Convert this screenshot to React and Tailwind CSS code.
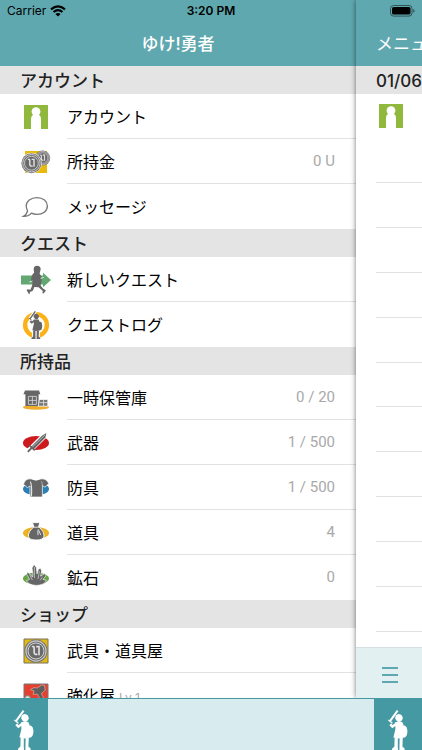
const GRAY = "#666666";

/* ---------- icons ---------- */

function Svg({ children }) {
  return (
    <svg viewBox="0 0 32 32" className="w-8 h-8 shrink-0" aria-hidden="true">
      {children}
    </svg>
  );
}

// little hero with sword and shield, 20 x 40
function Hero({ fill }) {
  return (
    <g fill={fill}>
      <path d="M9.6 0.6L2.2 10.8" stroke={fill} strokeWidth="2" />
      <path d="M0.4 10L4.4 13.2" stroke={fill} strokeWidth="1.4" />
      <path d="M2.2 14.4L4.4 16.6L8 14" fill="none" stroke={fill} strokeWidth="2.4" />
      <path d="M7.2 8.6Q7 4.4 10.8 4Q14.6 4.4 14.8 8.6L14.2 9.8Q13.4 12 11 12Q8.8 12 8 9.8z" />
      <path d="M7.2 12H14.2L15.6 15L16.4 27.6Q11 29.2 5.4 27.6L7.4 19z" />
      <ellipse cx="16.2" cy="21.4" rx="3.2" ry="6" />
      <path d="M6.6 28H9.8L9.8 36.6L10 40H4L4.2 38.4L6.4 36.6z" />
      <path d="M11.6 28H14.8L14.4 36.6L16.6 38.4V40H11.4z" />
    </g>
  );
}

function AccountIcon() {
  return (
    <Svg>
      <path d="M4 4h24v24h-24z" fill="#8fb83c" />
      <circle cx="16" cy="10.6" r="4.4" fill="#fff" />
      <path d="M11 28V18Q11 13.6 16 13.6Q21 13.6 21 18V28z" fill="#fff" />
    </Svg>
  );
}

function Coin({ cx, cy, r }) {
  return (
    <g transform={`translate(${cx} ${cy}) scale(${r / 10})`}>
      <circle r="10" fill="#707070" />
      <circle r="8.7" fill="none" stroke="#c9c9c9" strokeWidth="1" />
      <circle r="6.9" fill="#6a6a6a" stroke="#dadada" strokeWidth="0.8" />
      <path
        d="M-3.4 -3.6Q-1.8 -4.4 -1.6 -3V1.4Q-1.4 3.4 1.2 2.8M0.2 -3.8H2.6V3.6"
        fill="none"
        stroke="#e2e2e2"
        strokeWidth="1.4"
      />
    </g>
  );
}

function MoneyIcon() {
  return (
    <Svg>
      <path d="M5 5h22v22h-22z" fill="#e9b90c" />
      <Coin cx={22.6} cy={12} r={7.6} />
      <circle cx="11.4" cy="17.2" r="10.5" fill="#fff" />
      <Coin cx={11.4} cy={17.2} r={10} />
    </Svg>
  );
}

function MessageIcon() {
  return (
    <Svg>
      <path
        d="M17 6.6C23.2 6.6 27.4 10.4 27.4 15C27.4 19.8 23.2 23.4 17 23.4C14.8 23.4 13 23 11.4 22.2C9.4 24.6 6.6 25.6 3.4 25.4C5.6 24.2 7 22.4 7.6 20C6.8 18.4 6.2 16.8 6.2 15C6.2 10.4 10.8 6.6 17 6.6z"
        fill="#fff"
        stroke="#777"
        strokeWidth="1.3"
      />
    </Svg>
  );
}

function NewQuestIcon() {
  return (
    <Svg>
      <path d="M1 11.4H23V8.8L31 16L23 23.2V20.4H1z" fill="#63a873" />
      <path
        d="M14.6 2.6Q17 0.8 19.6 2.4Q21.4 4 20.4 6.6L19.6 9.6Q22 12 21.6 16L20.6 21.4L23 24.6L26 26.4L23.6 29.6L22.4 29L22.8 27L18.6 23.2L14.4 23L12.8 26.8L9.6 28.2L10.2 29.4L8.8 30L6.6 26L7.6 25.2L10.4 25.8L12 22L12.6 18L10.8 17.6L11.6 12.4Q12.6 9.6 14.2 8.8Q13 4.4 14.6 2.6z"
        fill={GRAY}
      />
      <path d="M9.4 18l3-1M20.6 14.4l3.2-1" stroke="#dfeee2" strokeWidth="1" />
    </Svg>
  );
}

function QuestLogIcon() {
  return (
    <Svg>
      <circle cx="16" cy="16" r="10.9" fill="none" stroke="#fbb117" strokeWidth="4.4" />
      <g transform="translate(8.6 2) scale(0.7)">
        <path d="M9.6 0.6L2.2 10.8" stroke="#fff" strokeWidth="5" />
        <path d="M5 28V41H16V28z" fill="#fff" />
        <Hero fill={GRAY} />
      </g>
    </Svg>
  );
}

function StorageIcon() {
  return (
    <Svg>
      <ellipse cx="16" cy="25.2" rx="13" ry="2.5" fill="#f0ad2b" />
      <path d="M5 8.6H19L20.4 12.2H18.6V24H5.4V12.2H3.4z" fill={GRAY} />
      <path d="M8.4 14.4h8v8h-8zM12.4 14v8.6M8.4 18.4h8" fill="none" stroke="#cfcfcf" strokeWidth="0.9" />
      <path d="M19.4 17.4h8.4v6.8h-9.6z" fill="#777" stroke="#fff" strokeWidth="0.8" />
      <path d="M23.6 17.4v6.6M19.4 20.6h8.6" stroke="#e6e6e6" strokeWidth="0.8" />
    </Svg>
  );
}

function WeaponIcon() {
  return (
    <Svg>
      <ellipse cx="16" cy="16" rx="13" ry="7" fill="#cc1a1f" />
      <path d="M8.4 24.6L26.6 6.6" stroke="#fff" strokeWidth="5.6" />
      <path d="M10.4 20.4L22 8.8L26.4 6L25.4 10.4L13.6 22.4z" fill={GRAY} />
      <path d="M11.4 21L25 8" stroke="#c4c4c4" strokeWidth="0.8" />
      <path d="M9.4 18.4L14.8 23.4M7.8 24.8L11.6 21" stroke={GRAY} strokeWidth="1.8" />
    </Svg>
  );
}

function ArmorIcon() {
  return (
    <Svg>
      <ellipse cx="16" cy="17" rx="13" ry="6.2" fill="#2c7fb4" />
      <path
        d="M11.6 7Q16 9.4 20.4 7Q26.4 6 28.8 11.6L25 15.2L22.4 13.6V25H10V14L7.4 15.6L3.4 12.2Q5.6 6 11.6 7z"
        fill={GRAY}
        stroke="#fff"
        strokeWidth="0.7"
      />
      <path d="M10.4 9.6Q12.2 14 11.4 24.4" fill="none" stroke="#e8e8e8" strokeWidth="1.1" />
      <path d="M21.4 9.4Q22.4 11 22.4 14" fill="none" stroke="#c4c4c4" strokeWidth="0.8" />
    </Svg>
  );
}

function ToolIcon() {
  return (
    <Svg>
      <ellipse cx="16" cy="16" rx="13" ry="6" fill="#ebb223" />
      <path
        d="M12.4 5.6H19.8L18.6 9.8Q24.6 14.6 24 19.4Q23.2 23 16.2 23Q9 23 8.4 19.4Q8 14.6 14 9.8z"
        fill={GRAY}
        stroke="#fff"
        strokeWidth="0.9"
      />
      <path d="M13.4 10.2H19.2M18.2 12.4L20.8 18M17.8 13.4L18 18.2" fill="none" stroke="#eee" strokeWidth="0.9" />
    </Svg>
  );
}

function OreIcon() {
  return (
    <Svg>
      <ellipse cx="16" cy="16.4" rx="13" ry="6" fill="#64a744" />
      <path
        d="M13 12L12 6L14 2.6L16.4 5.6L17 12L18.4 7.2L20.6 6.2L21.6 9L20.6 14.2L24.8 11.6L26 13.8L23 17.4L26.6 18.4Q24.4 23.2 16 23.4Q8 22.8 6.4 18.6L9.6 17.4L6.8 12.6L7.4 10L10.4 12.2L12.4 15z"
        fill={GRAY}
        stroke="#fff"
        strokeWidth="0.6"
      />
      <path d="M14.4 5V16M19.4 9L18 17M9.4 12.4L12.4 18M22.6 14.8L20 18.4" stroke="#d8d8d8" strokeWidth="0.7" />
    </Svg>
  );
}

function ShopIcon() {
  return (
    <Svg>
      <path d="M4 4h24v24h-24z" fill="#e3b915" stroke="#77735f" strokeWidth="1" />
      <Coin cx={16} cy={16} r={11.6} />
    </Svg>
  );
}

function ForgeIcon() {
  return (
    <Svg>
      <path d="M4 4h24v24h-24z" fill="#e5402f" stroke="#777" strokeWidth="1" />
      <path d="M10.4 9.6L14 7.6L17.4 8L21.6 5L24.6 5.6L25.2 10.4L21.4 13.4L24.4 20L21.4 21.6L17.4 14L13 14.4L14.2 11z" fill="#5e5e5e" stroke="#f7b5ab" strokeWidth="0.6" />
      <circle cx="7.6" cy="18.6" r="3" fill="#ddd" stroke="#777" />
      <path d="M10 20.4h8v3h-8z" fill="#ddd" />
    </Svg>
  );
}

function WifiIcon() {
  return (
    <svg viewBox="0 0 16 12" className="w-4 h-3" aria-hidden="true">
      <path d="M1 4.4Q8 -1.8 15 4.4" fill="none" stroke="#000" strokeWidth="2.1" />
      <path d="M3.5 7.1Q8 3.1 12.5 7.1" fill="none" stroke="#000" strokeWidth="2" />
      <path d="M8 11.6L5.4 9Q8 6.9 10.6 9z" />
    </svg>
  );
}

function BatteryIcon() {
  return (
    <svg viewBox="0 0 25 12" className="w-[25px] h-3" aria-hidden="true">
      <rect x="0.5" y="0.5" width="21.5" height="10.6" rx="3" fill="none" stroke="#2f5457" />
      <rect x="2" y="2" width="18.5" height="7.6" rx="1.6" />
      <path d="M23.2 4V7.8Q24.6 7 24.6 5.9Q24.6 4.8 23.2 4z" fill="#2f5457" />
    </svg>
  );
}

/* ---------- data ---------- */

const sections = [
  {
    title: "アカウント",
    items: [
      { label: "アカウント", icon: AccountIcon },
      { label: "所持金", icon: MoneyIcon, value: "0 U" },
      { label: "メッセージ", icon: MessageIcon },
    ],
  },
  {
    title: "クエスト",
    items: [
      { label: "新しいクエスト", icon: NewQuestIcon },
      { label: "クエストログ", icon: QuestLogIcon },
    ],
  },
  {
    title: "所持品",
    items: [
      { label: "一時保管庫", icon: StorageIcon, value: "0 / 20" },
      { label: "武器", icon: WeaponIcon, value: "1 / 500" },
      { label: "防具", icon: ArmorIcon, value: "1 / 500" },
      { label: "道具", icon: ToolIcon, value: "4" },
      { label: "鉱石", icon: OreIcon, value: "0" },
    ],
  },
  {
    title: "ショップ",
    items: [
      { label: "武具・道具屋", icon: ShopIcon },
      { label: "強化屋", icon: ForgeIcon, note: "Lv 1" },
    ],
  },
];

/* ---------- parts ---------- */

function StatusBar() {
  return (
    <div className="absolute inset-x-0 top-0 z-20 h-[22px] grid grid-cols-3 items-center px-[7px] text-[12px] text-black">
      <div className="flex items-center gap-1">
        <span>Carrier</span>
        <WifiIcon />
      </div>
      <span className="text-center font-semibold">3:20 PM</span>
      <div className="flex justify-end">
        <BatteryIcon />
      </div>
    </div>
  );
}

function SectionTitle({ children }) {
  return (
    <h2 className="h-7 shrink-0 flex items-center pt-[3px] pl-5 bg-[#e4e4e4] text-[17px] font-medium text-[#222]">
      {children}
    </h2>
  );
}

function MenuRow({ item, last }) {
  const Icon = item.icon;
  return (
    <li>
      <button type="button" className="w-full h-[45px] flex items-center gap-[15px] pl-5 text-left">
        <Icon />
        <span
          className={
            "flex-1 h-full flex items-center justify-between pt-px pr-[21px] border-b " +
            (last ? "border-transparent" : "border-[#e2e2e2]")
          }
        >
          <span className="text-[16px] text-black">
            {item.label}
            {item.note && <span className="ml-1 text-[12px] text-[#aaa]">{item.note}</span>}
          </span>
          {item.value && <span className="font-['Roboto',sans-serif] text-[15px] text-[#a9a9a9]">{item.value}</span>}
        </span>
      </button>
    </li>
  );
}

function HeroButton() {
  return (
    <button type="button" aria-label="勇者" className="w-12 bg-[#4499a3] flex justify-center items-end">
      <svg viewBox="0 0 20 40" className="w-5 h-10" aria-hidden="true">
        <Hero fill="#fff" />
      </svg>
    </button>
  );
}

function App() {
  return (
    <div
      className="relative h-screen flex flex-col overflow-hidden bg-white font-['Inter','Noto_Sans_CJK_JP',sans-serif]"
    >
      <StatusBar />

      <div className="flex-1 min-h-0 flex">
        {/* side menu */}
        <nav className="flex-1 min-w-0 overflow-hidden">
          <header className="h-[66px] pt-6 bg-[#5fa8af] flex items-center justify-center">
            <h1 className="text-[17px] font-medium text-white">ゆけ!勇者</h1>
          </header>
          {sections.map((section) => (
            <section key={section.title}>
              <SectionTitle>{section.title}</SectionTitle>
              <ul>
                {section.items.map((item, i) => (
                  <MenuRow key={item.label} item={item} last={i === section.items.length - 1} />
                ))}
              </ul>
            </section>
          ))}
        </nav>

        {/* page pushed to the right */}
        <main className="z-10 w-[66px] shrink-0 flex flex-col overflow-hidden whitespace-nowrap bg-white shadow-[0_0_5px_rgba(0,0,0,0.55)]">
          <header className="h-[66px] pt-6 pl-5 shrink-0 bg-[#5fa8af] flex items-center">
            <h1 className="text-[17px] text-white">メニュー</h1>
          </header>
          <SectionTitle>01/06</SectionTitle>
          <ul className="flex-1 flex flex-col pb-[15px]">
            <li className="flex-1 flex items-center pl-[19px]">
              <AccountIcon />
            </li>
            {Array.from({ length: 11 }, (_, i) => (
              <li key={i} className="flex-1 ml-5 border-b border-[#e2e2e2]"></li>
            ))}
          </ul>
          <div className="h-[51px] shrink-0 bg-[#e2f0f1] border-t border-[#d3dfe0] flex items-center pl-[25px]">
            <button type="button" aria-label="メニュー" className="pt-1">
              <svg viewBox="0 0 18 18" className="w-[18px] h-[18px]" aria-hidden="true">
                <path d="M1 2h16M1 9h16M1 16h16" stroke="#5fa8af" strokeWidth="1.8" />
              </svg>
            </button>
          </div>
        </main>
      </div>

      <footer className="z-20 h-[52px] shrink-0 flex justify-between bg-[#d8ebee] border-t border-[#4499a3]">
        <HeroButton />
        <HeroButton />
      </footer>
    </div>
  );
}

export default App;
